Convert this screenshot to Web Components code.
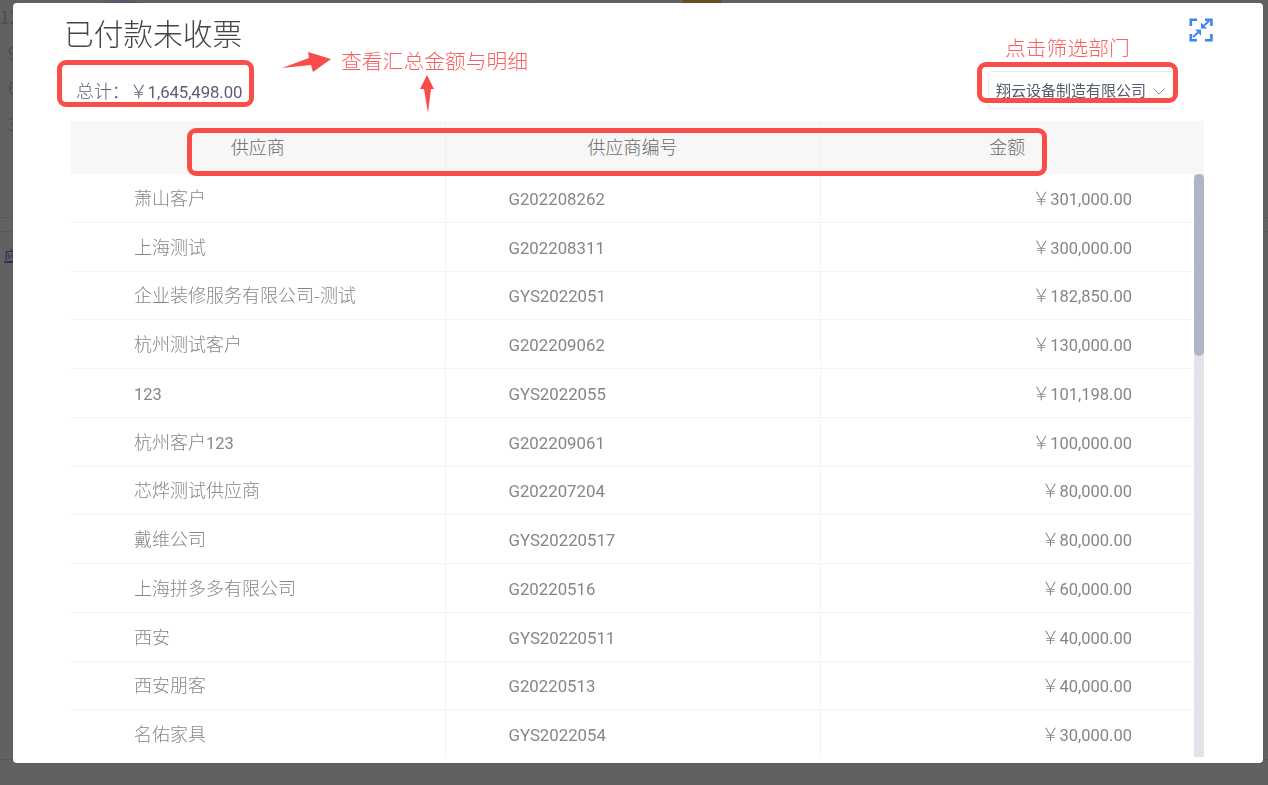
<!DOCTYPE html>
<html lang="zh-CN">
<head>
<meta charset="utf-8">
<title>已付款未收票</title>
<style>
    html, body { margin: 0; padding: 0; height: 100%; overflow: hidden; background: #616161; }
    body { font-family: "Noto Sans CJK SC", "Noto Sans", sans-serif; }
</style>
</head>
<body>
<page-backdrop></page-backdrop>
<pay-dialog>
    <span slot="title">已付款未收票</span>
    <span slot="total">总计：￥<num-text>1,645,498.00</num-text></span>
    <dept-select slot="select">翔云设备制造有限公司</dept-select>
    <data-row head><span slot="name">供应商</span><span slot="code">供应商编号</span><span slot="money">金额</span></data-row>
    <scroll-body slot="body" id="rows"></scroll-body>
</pay-dialog>
<note-layer></note-layer>

<script>
const rows = [
    ['萧山客户', 'G202208262', '￥301,000.00'],
    ['上海测试', 'G202208311', '￥300,000.00'],
    ['企业装修服务有限公司-测试', 'GYS2022051', '￥182,850.00'],
    ['杭州测试客户', 'G202209062', '￥130,000.00'],
    ['123', 'GYS2022055', '￥101,198.00'],
    ['杭州客户123', 'G202209061', '￥100,000.00'],
    ['芯烨测试供应商', 'G202207204', '￥80,000.00'],
    ['戴维公司', 'GYS20220517', '￥80,000.00'],
    ['上海拼多多有限公司', 'G20220516', '￥60,000.00'],
    ['西安', 'GYS20220511', '￥40,000.00'],
    ['西安朋客', 'G20220513', '￥40,000.00'],
    ['名佑家具', 'GYS2022054', '￥30,000.00']
];

// page behind the modal, only small bits show
class PageBackdrop extends HTMLElement {
    connectedCallback() {
        this.attachShadow({mode: 'open'}).innerHTML = /*html*/ `
        <style>
            :host { display: block; height: 785px; background: #616161; color: #4c4c4c; overflow: hidden; font-size: 17px; line-height: 20px; }
            .top { display: flex; height: 3px; }
            .circle { width: 72px; height: 40px; margin-left: 86px; border-radius: 50%; background: #5c5468; }
            .line { width: 1px; background: #585858; }
            .orange { width: 38px; margin-left: 150px; background: #6b4a1e; }
            .axis { padding-top: 4px; height: 210px; }
            .axis div { height: 35.5px; padding-left: 8px; }
            .axis div:first-child { padding-left: 0; }
            .rule { height: 1px; background: #585858; margin-bottom: 13px; }
            .link { padding-left: 4px; color: #2b2b55; font-size: 14px; text-decoration: underline; }
            .bottom { height: 1px; background: #555; margin-top: 494px; }
        </style>
        <div class="top">
            <div class="circle"></div>
            <div class="line" style="margin-left:361px"></div>
            <div class="line" style="margin-left:12px"></div>
            <div class="orange"></div>
            <div class="line" style="margin-left:347px"></div>
            <div class="line" style="margin-left:13px"></div>
        </div>
        <div class="axis"><div>12</div><div>9</div><div>6</div><div>3</div></div>
        <div class="rule"></div>
        <div class="rule"></div>
        <div class="link">应</div>
        <div class="bottom"></div>
        `;
    }
}

// digits are narrower than the CJK text around them
class NumText extends HTMLElement {
    connectedCallback() {
        // no whitespace around the slot, it would show up as a gap
        this.attachShadow({mode: 'open'}).innerHTML =
            '<style>:host { font-family: Roboto, sans-serif; font-weight: 400; font-size: var(--num-size, 16.5px); }</style><slot></slot>';
    }
}

class PayDialog extends HTMLElement {
    connectedCallback() {
        this.attachShadow({mode: 'open'}).innerHTML = /*html*/ `
        <style>
            :host {
                position: fixed;
                left: 13px;
                top: 3px;
                width: 1250px;
                height: 760px;
                box-sizing: border-box;
                padding: 0 59px 6px 58px;
                display: flex;
                flex-direction: column;
                background: #fff;
                border-radius: 4px;
                overflow: hidden;
            }
            .head { display: flex; justify-content: space-between; height: 118px; flex: none; }
            .title { margin: 12px 0 0 -7px; font-size: 29.7px; font-weight: 300; line-height: 36px; color: #444; }
            .total { margin: 27px 0 0 5px; font-size: 18px; font-weight: 300; line-height: 24px; color: #5a6072; white-space: nowrap; letter-spacing: -0.1px; --num-size: 16.8px; }
            .right { display: flex; gap: 14px; align-items: flex-start; margin-right: -9px; }
            .right svg { margin-top: 15px; }
            ::slotted([slot="select"]) { margin-top: 68px; }
        </style>
        <div class="head">
            <div>
                <div class="title"><slot name="title"></slot></div>
                <div class="total"><slot name="total"></slot></div>
            </div>
            <div class="right">
                <slot name="select"></slot>
                <svg width="24" height="24" viewBox="0 0 24 24" fill="none" stroke="#3e84f6">
                    <path stroke-width="2.6" d="M1.8 8V1.8H8M16 1.8h6.4V8M22.4 16v6.2H16M8 22.2H1.8V16"/>
                    <path stroke-width="2" d="M15 7.5L20 3M9 14.5L4 19"/>
                    <path fill="#3e84f6" stroke="none" d="M12 10.5V4.5L18 10.5zM12 11.5H6L12 17.5z"/>
                </svg>
            </div>
        </div>
        <slot></slot>
        <slot name="body"></slot>
        `;
    }
}

class DeptSelect extends HTMLElement {
    connectedCallback() {
        this.attachShadow({mode: 'open'}).innerHTML = /*html*/ `
        <style>
            :host {
                display: flex;
                width: 187px;
                height: 38px;
                box-sizing: border-box;
                padding: 0 9px 2px 7px;
                justify-content: space-between;
                align-items: center;
                border: 1px solid #e8eaee;
                border-radius: 4px;
                font-size: 15px;
                color: #555c6e;
                white-space: nowrap;
            }
            svg { margin-top: 5px; }
        </style>
        <slot></slot>
        <svg width="12" height="7" viewBox="0 0 12 7" fill="none" stroke="#8f93a0" stroke-width="1"><path d="M.5.5L6 6 11.5.5"/></svg>
        `;
    }
}

class DataRow extends HTMLElement {
    connectedCallback() {
        this.attachShadow({mode: 'open'}).innerHTML = /*html*/ `
        <style>
            :host {
                display: grid;
                grid-template-columns: 374.5px 375px 1fr;
                height: 48.75px;
                box-sizing: border-box;
                border-bottom: 1px solid #f2f3f6;
                font-size: 18px;
                font-weight: 300;
                color: #868686;
            }
            :host([head]) {
                flex: none;
                height: 53px;
                padding-right: 10px;
                background: #f7f7f7;
                border-bottom: 0;
                color: #6a6a6a;
            }
            div { display: flex; align-items: center; border-right: 1px solid #f2f3f6; white-space: nowrap; margin-bottom: 1px; padding-bottom: 1px; }
            .name { padding-left: 63px; }
            .code { padding-left: 63px; --num-size: 16.8px; }
            .money { justify-content: flex-end; padding-right: 62px; border-right: 0; }
            :host([head]) div { justify-content: center; padding: 0 0 3px; margin: 0; border-right-color: #f0f0f0; }
            :host([head]) .money { padding-right: 0; }
        </style>
        <div class="name"><slot name="name"></slot></div>
        <div class="code"><slot name="code"></slot></div>
        <div class="money"><slot name="money"></slot></div>
        `;
    }
}

// rows on the left, drawn scrollbar on the right (native one is hidden in headless)
class ScrollBody extends HTMLElement {
    connectedCallback() {
        this.attachShadow({mode: 'open'}).innerHTML = /*html*/ `
        <style>
            :host { display: flex; flex: 1; min-height: 0; }
            .box { flex: 1; min-width: 0; overflow: hidden; }
            .track { width: 10px; flex: none; background: #e1e5ea; }
            .thumb { height: 182px; background: #afb5c6; border-radius: 5px; }
        </style>
        <div class="box"><slot></slot></div>
        <div class="track"><div class="thumb"></div></div>
        `;
    }
}

class NoteLayer extends HTMLElement {
    connectedCallback() {
        this.attachShadow({mode: 'open'}).innerHTML = /*html*/ `
        <style>
            :host { position: fixed; inset: 0; pointer-events: none; }
            .box { position: absolute; box-sizing: border-box; border: 5px solid #f94d4a; border-radius: 9px; }
            .note { position: absolute; font-size: 20.8px; font-weight: 300; line-height: 28px; color: #fa5f5f; white-space: nowrap; }
            svg { position: absolute; left: 0; top: 0; }
        </style>
        <div class="box" style="left:57px;top:60px;width:197px;height:47px"></div>
        <div class="box" style="left:187px;top:128px;width:860px;height:48px"></div>
        <div class="box" style="left:977px;top:62px;width:201px;height:41px"></div>
        <div class="note" style="left:341px;top:46px">查看汇总金额与明细</div>
        <div class="note" style="left:1005px;top:33px">点击筛选部门</div>
        <svg width="1268" height="785" fill="#f94d4a">
            <path d="M282 68L309 58 308 52 331 59 313 72 311 65z"/>
            <path d="M427 75L434 89H431L428 113 424 89H420z"/>
        </svg>
        `;
    }
}

customElements.define('page-backdrop', PageBackdrop);
customElements.define('num-text', NumText);
customElements.define('pay-dialog', PayDialog);
customElements.define('dept-select', DeptSelect);
customElements.define('data-row', DataRow);
customElements.define('scroll-body', ScrollBody);
customElements.define('note-layer', NoteLayer);

// wrap latin runs so they get the narrower digit font
const numify = (text) => text.replace(/[A-Z0-9,.]+/g, '<num-text>$&</num-text>');

const list = document.getElementById('rows');
rows.forEach(([name, code, money]) => {
    const row = document.createElement('data-row');
    [['name', name], ['code', code], ['money', money]].forEach(([slot, text]) => {
        const span = document.createElement('span');
        span.slot = slot;
        span.innerHTML = numify(text);
        row.appendChild(span);
    });
    list.appendChild(row);
});
</script>
</body>
</html>
